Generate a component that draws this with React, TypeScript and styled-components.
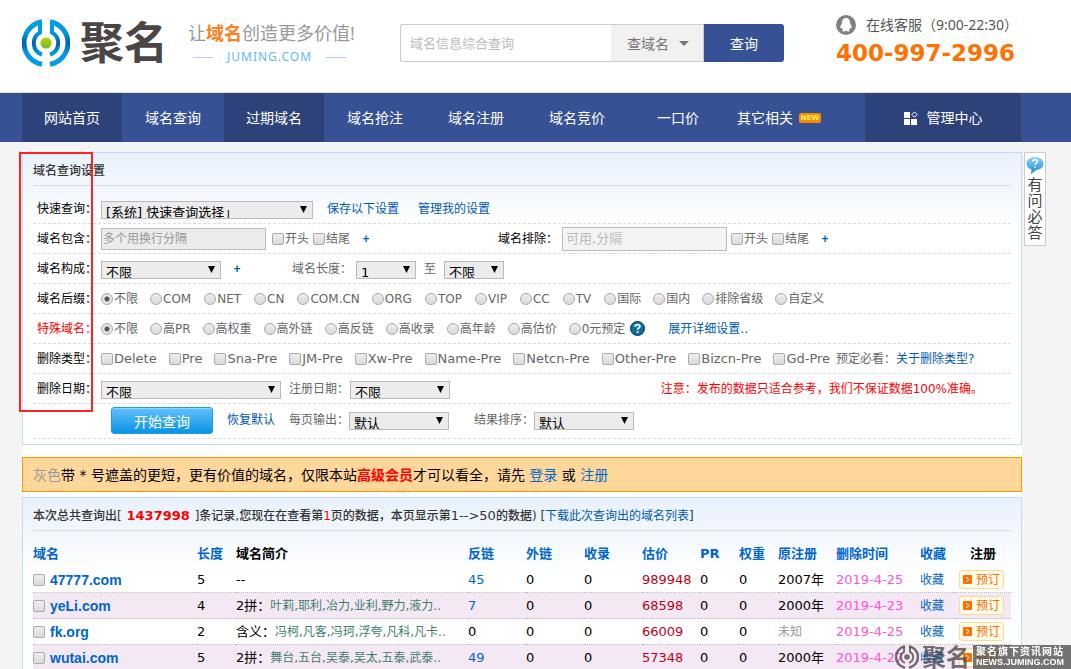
import React from "react";
import styled, { createGlobalStyle, css } from "styled-components";

const LATIN = '"DejaVu Sans", "Noto Sans CJK SC", sans-serif';
const YAHEI = '"Noto Sans", "Noto Sans CJK SC", sans-serif';

const GlobalStyle = createGlobalStyle`
  * { box-sizing: border-box; }
  html { scrollbar-width: none; }
  body { margin: 0; background: #f4f4f4; color: #666; font: 12px/16px ${LATIN}; }
  button, input, select { font-family: inherit; margin: 0; }
  a { color: #0059b2; text-decoration: none; }
`;

/* ---------- header ---------- */
const Header = styled.header`
  display: flex;
  height: 93px;
  padding: 0 22px;
  background: #fff;
  border-bottom: 1px solid #ddd;
  font-family: ${YAHEI};
  white-space: nowrap;
`;
const Brand = styled.a`
  display: flex;
  gap: 10px;
  padding-top: 19px;
  width: 166px;
  flex: none;
`;
const BrandName = styled.span`
  font-size: 44px;
  line-height: 46px;
  font-weight: 700;
  color: #4b4545;
`;
const Slogan = styled.div`
  width: 170px;
  flex: none;
  padding-top: 22px;
`;
const SloganText = styled.p`
  margin: 0;
  font-size: 18px;
  line-height: 22px;
  color: #999;
  b { color: #ff7f1a; }
`;
const SloganSite = styled.p`
  display: flex;
  align-items: center;
  justify-content: space-between;
  margin: 4px 0 0;
  padding: 0 12px 0 5px;
  font-size: 12px;
  line-height: 18px;
  letter-spacing: 1px;
  color: #5fbcea;
  &::before, &::after { content: ""; width: 20px; height: 1px; background: #a5d8ee; }
`;
const Search = styled.form`
  display: flex;
  width: 384px;
  height: 38px;
  margin: 24px 0 0 42px;
`;
const SearchInput = styled.input`
  flex: 1;
  min-width: 0;
  padding: 0 9px;
  border: 1px solid #ccc;
  border-right: 0;
  border-radius: 3px 0 0 3px;
  font-size: 13px;
  color: #555;
  &::placeholder { color: #bbb; opacity: 1; }
`;
const SearchKind = styled.button`
  display: flex;
  align-items: center;
  gap: 10px;
  width: 93px;
  padding: 0 0 0 16px;
  border: 1px solid #ccc;
  border-left: 0;
  background: #f1f1f1;
  font-size: 14px;
  color: #777;
  svg { flex: none; }
`;
const SearchButton = styled.button`
  width: 80px;
  border: 0;
  border-radius: 0 3px 3px 0;
  background: #365194;
  color: #fff;
  font-size: 14px;
`;
const Service = styled.div`
  margin: 14px 0 0 52px;
`;
const ServiceHours = styled.div`
  display: flex;
  align-items: center;
  gap: 10px;
  height: 22px;
  font-size: 14px;
  color: #555;
`;
const Phone = styled.strong`
  display: block;
  font: 700 23px/34px "DejaVu Sans", sans-serif;
  color: #ff7200;
`;

/* ---------- navigation ---------- */
const Nav = styled.nav`
  display: flex;
  gap: 1px;
  height: 49px;
  padding: 0 50px 0 22px;
  background: #365194;
  font: 14px/49px ${YAHEI};
`;
const NavLink = styled.a<{ $dark?: boolean; $wide?: boolean }>`
  display: flex;
  align-items: center;
  justify-content: center;
  gap: ${(p) => (p.$wide ? 9 : 6)}px;
  width: ${(p) => (p.$wide ? 156 : 100)}px;
  flex: none;
  margin-left: ${(p) => (p.$wide ? "auto" : "0")};
  color: #fff;
  background: ${(p) => (p.$dark ? "#2d4279" : "transparent")};
`;
const NewTag = styled.span`
  width: 22px;
  border-radius: 2px;
  background: #ff8a00;
  color: #fff46b;
  font: 700 7px/10px "DejaVu Sans", sans-serif;
  text-align: center;
`;

/* ---------- page body ---------- */
const Body = styled.div`
  display: flex;
  align-items: flex-start;
  gap: 2px;
  padding: 10px 25px 0 22px;
`;
const Main = styled.main`
  flex: 1;
  min-width: 0;
  background: #fff;
`;
const HelpTab = styled.a`
  display: flex;
  flex-direction: column;
  align-items: center;
  width: 22px;
  height: 94px;
  padding: 3px 2px;
  border: 1px solid #ccc;
  background: #fff;
  color: #444;
  font: 15px/16px ${YAHEI};
  text-align: center;
`;
const Panel = styled.section`
  position: relative;
  padding: 0 10px;
  border: 1px solid #c3daf3;
  background: linear-gradient(#e8f1fc, #fff 76px);
`;
const PanelTitle = styled.h2`
  height: 33px;
  margin: 0;
  border-bottom: 1px solid #d8dde3;
  font-size: 12px;
  line-height: 36px;
  font-weight: 500;
  color: #333;
  white-space: nowrap;
`;
const Marker = styled.div`
  position: absolute;
  left: -4px;
  top: -1px;
  width: 74px;
  height: 260px;
  border: 2px solid #f22;
  pointer-events: none;
`;
const SettingsForm = styled.form`
  padding: 8px 0 5px;
`;
const Row = styled.div<{ $tall?: boolean }>`
  display: flex;
  align-items: center;
  height: ${(p) => (p.$tall ? 35 : 30)}px;
  padding-bottom: ${(p) => (p.$tall ? 3 : 0)}px;
  border-bottom: 1px dashed #ddd;
  white-space: nowrap;
`;
const RowLabel = styled.span<{ $hot?: boolean }>`
  width: 68px;
  flex: none;
  padding-left: 4px;
  color: ${(p) => (p.$hot ? "#f00" : "#000")};
`;
const Options = styled.div`
  display: flex;
  gap: 12px;
`;
const InlineText = styled.label<{ $ml: number; $w?: number; $dark?: boolean }>`
  margin-left: ${(p) => p.$ml}px;
  width: ${(p) => (p.$w ? p.$w + "px" : "auto")};
  flex: none;
  color: ${(p) => (p.$dark ? "#000" : "inherit")};
`;
const RowLink = styled.a<{ $ml: number }>`
  margin-left: ${(p) => p.$ml}px;
`;
const PlusButton = styled.button`
  width: 8px;
  margin-left: 12px;
  padding: 0;
  border: 0;
  background: none;
  font: 700 12px/16px "Liberation Sans", sans-serif;
  color: #0066b3;
`;
const Warning = styled.p`
  margin: 0 28px 0 auto;
  color: #f00;
`;
const SelectBox = styled.span<{ $w: number }>`
  position: relative;
  display: block;
  flex: none;
  width: ${(p) => p.$w}px;
  height: 18px;
  margin-top: 3px;
  svg { position: absolute; right: 6px; top: 5px; pointer-events: none; }
  select {
    display: block;
    appearance: none;
    width: 100%;
    height: 18px;
    padding: 4px 14px 0 4px;
    border: 1px solid #bbb;
    border-radius: 0;
    background: #ececec;
    color: #000;
    font-size: 13px;
    line-height: 14px;
  }
`;
const TextInput = styled.input<{ $light?: boolean }>`
  width: 165px;
  height: ${(p) => (p.$light ? 24 : 22)}px;
  padding: 0 ${(p) => (p.$light ? 3 : 1)}px;
  border: 1px solid #bbb;
  background: ${(p) => (p.$light ? "#f4f4f4" : "#ececec")};
  font-size: ${(p) => (p.$light ? 13 : 12)}px;
  &::placeholder { color: ${(p) => (p.$light ? "#bbb" : "#999")}; opacity: 1; }
`;
const Choice = styled.label<{ $big?: boolean; $latin?: boolean }>`
  display: flex;
  align-items: center;
  gap: 1px;
  padding-right: ${(p) => (p.$latin ? 1 : 0)}px;
  font-size: ${(p) => (p.$big ? 13 : 12)}px;
`;
const toggle = css`
  appearance: none;
  flex: none;
  width: 12px;
  height: 12px;
  margin: 1px 0 0;
  border: 1px solid #aaa;
  background: linear-gradient(#eee, #dadada);
`;
const Check = styled.input`
  ${toggle}
  border-radius: 2px;
`;
const Radio = styled.input`
  ${toggle}
  border-radius: 50%;
  &:checked { background: radial-gradient(circle, #555 0 2px, #e6e6e6 3px); }
`;
const Pair = styled.div<{ $ml: number }>`
  display: flex;
  gap: 4px;
  margin-left: ${(p) => p.$ml}px;
`;
const Submit = styled.button`
  width: 102px;
  height: 27px;
  margin: 2px 0 0 78px;
  padding: 0;
  border: 1px solid #1f9be8;
  border-radius: 3px;
  box-shadow: inset 0 1px 0 #8fd6ff;
  background: linear-gradient(#62c1fb, #0a93e4);
  color: #fff;
  font-size: 14px;
`;
const HelpIcon = styled.svg`
  margin-left: 5px;
`;

/* ---------- notice and results ---------- */
const Notice = styled.p`
  margin: 12px 0 5px;
  padding: 0 10px;
  height: 35px;
  border: 1px solid #f90;
  background: #ffd79b;
  color: #000;
  font: 14px/34px ${LATIN};
  white-space: nowrap;
  i { font-style: normal; color: #999; }
  b { color: #f00; }
  a { color: #0066cc; }
`;
const Total = styled.b`
  margin: 0 1px;
  font-size: 13px;
  color: #f00;
`;
const Thin = styled.span<{ $big?: boolean; $hot?: boolean }>`
  font-weight: 400;
  font-size: ${(p) => (p.$big ? 13 : 12)}px;
  color: ${(p) => (p.$hot ? "#f00" : "inherit")};
`;
const Table = styled.table`
  width: 100%;
  margin-top: 9px;
  border-collapse: separate;
  border-spacing: 0;
  table-layout: fixed;
  color: #000;
  font-size: 13px;
  white-space: nowrap;
`;
const Th = styled.th<{ $plain?: boolean; $center?: boolean }>`
  height: 27px;
  padding: 0;
  text-align: ${(p) => (p.$center ? "center" : "left")};
  color: ${(p) => (p.$plain ? "#000" : "#0066cc")};
`;
const Tr = styled.tr`
  &:nth-child(even) { background: #f4e8f5; }
`;
const Td = styled.td<{ $color?: string }>`
  height: 26px;
  padding: 0;
  border-bottom: 1px dotted #bbb;
  color: ${(p) => p.$color ?? "#000"};
`;
const DomainCell = styled.div`
  display: flex;
  align-items: center;
  gap: 5px;
  a { font: 700 14px/16px "Liberation Sans", sans-serif; color: #0066cc; }
`;
const Meaning = styled.span`
  font-size: 12px;
  color: #3f7d6e;
`;
const Fav = styled.a`
  font-size: 12px;
  color: #0066cc;
`;
const Unknown = styled.span`
  font-size: 12px;
  color: #999;
`;
const Book = styled.button`
  display: flex;
  align-items: center;
  gap: 4px;
  width: 45px;
  height: 19px;
  margin-left: 4px;
  padding: 0 3px;
  border: 1px solid #ffd990;
  border-radius: 3px;
  background: #fffbe8;
  color: #ff6f00;
  font-size: 12px;
  line-height: 14px;
`;

/* ---------- watermark ---------- */
const Watermark = styled.div`
  position: fixed;
  right: 0;
  bottom: 0;
  display: flex;
  align-items: center;
  gap: 3px;
  height: 25px;
  color: rgba(70, 66, 66, 0.75);
  font: 700 24px/25px ${YAHEI};
  white-space: nowrap;
  pointer-events: none;
`;
const WatermarkPlate = styled.div`
  width: 98px;
  height: 24px;
  padding: 1px 3px;
  background: rgba(60, 60, 60, 0.7);
  color: #fff;
  font-size: 10px;
  line-height: 11px;
  letter-spacing: 1px;
  small { display: block; letter-spacing: 0; font: 700 9px/10px "Liberation Sans", sans-serif; }
`;

function LogoMark({ size, mono }: { size: number; mono?: boolean }) {
  const stroke = mono ? "rgba(70,66,66,.75)" : "url(#ring)";
  return (
    <svg width={size} height={size} viewBox="0 0 48 48" fill="none" aria-hidden="true">
      <defs>
        <linearGradient id="ring" x1="0" y1="0" x2="0" y2="48" gradientUnits="userSpaceOnUse">
          <stop offset="0" stopColor="#00a0ea" />
          <stop offset=".3" stopColor="#0096e0" />
          <stop offset=".5" stopColor="#0060b4" />
          <stop offset=".7" stopColor="#0096e0" />
          <stop offset="1" stopColor="#00a0ea" />
        </linearGradient>
        <linearGradient id="core" x1="0" y1="0" x2="0" y2="1">
          <stop offset="0" stopColor="#b9d400" />
          <stop offset="1" stopColor="#77b82a" />
        </linearGradient>
      </defs>
      <g stroke={stroke} strokeWidth="5">
        <path d="M20 2.700A21.600 21.600 0 0 0 20 45.300" />
        <path d="M28 2.700A21.600 21.600 0 0 1 28 45.300" />
      </g>
      <g stroke={stroke} strokeWidth="4">
        <path d="M18 4V13.600A12 12 0 0 0 20 35.500" />
        <path d="M30 4V13.600A12 12 0 0 1 28 35.500" />
      </g>
      <circle cx="24" cy="24" r="5.600" fill={mono ? stroke : "url(#core)"} />
    </svg>
  );
}

function Select({ width, value, label, id }: { width: number; value: string; label: string; id?: string }) {
  return (
    <SelectBox $w={width}>
      <select aria-label={label} id={id} defaultValue={value}>
        <option>{value}</option>
      </select>
      <svg width="7" height="7" viewBox="0 0 7 7" aria-hidden="true"><path d="M0 0h7L3.500 7z" fill="#000" /></svg>
    </SelectBox>
  );
}

function StartEnd({ ml }: { ml: number }) {
  return (
    <Pair $ml={ml}>
      <Choice><Check type="checkbox" />开头</Choice>
      <Choice><Check type="checkbox" />结尾</Choice>
    </Pair>
  );
}

function Radios({ name, items }: { name: string; items: string[] }) {
  return (
    <Options>
      {items.map((t, i) => (
        <Choice key={t} $latin={/^[A-Z]{2,3}$/.test(t)}>
          <Radio type="radio" name={name} defaultChecked={i === 0} />{t}
        </Choice>
      ))}
    </Options>
  );
}

const NAV = ["网站首页", "域名查询", "过期域名", "域名抢注", "域名注册", "域名竞价", "一口价"];
const SUFFIXES = ["不限", "COM", "NET", "CN", "COM.CN", "ORG", "TOP", "VIP", "CC", "TV", "国际", "国内", "排除省级", "自定义"];
const SPECIALS = ["不限", "高PR", "高权重", "高外链", "高反链", "高收录", "高年龄", "高估价", "0元预定"];
const DELETES = ["Delete", "Pre", "Sna-Pre", "JM-Pre", "Xw-Pre", "Name-Pre", "Netcn-Pre", "Other-Pre", "Bizcn-Pre", "Gd-Pre"];
const COLS = [164, 39, 232, 58, 58, 58, 58, 39, 39, 58, 84, 35, 56];
const HEADS = ["域名", "长度", "域名简介", "反链", "外链", "收录", "估价", "PR", "权重", "原注册", "删除时间", "收藏", "注册"];
const ROWS = [
  { name: "47777.com", len: 5, kind: "--", meaning: "", back: "45", price: "989948", year: "2007年", date: "2019-4-25" },
  { name: "yeLi.com", len: 4, kind: "2拼：", meaning: "叶莉,耶利,冶力,业利,野力,液力..", back: "7", price: "68598", year: "2000年", date: "2019-4-23" },
  { name: "fk.org", len: 2, kind: "含义：", meaning: "冯柯,凡客,冯珂,浮夸,凡科,凡卡..", back: "0", price: "66009", year: "", date: "2019-4-25" },
  { name: "wutai.com", len: 5, kind: "2拼：", meaning: "舞台,五台,吴泰,吴太,五泰,武泰..", back: "49", price: "57348", year: "2000年", date: "2019-4-27" },
];

export default function App() {
  return (
    <>
      <GlobalStyle />
      <Header>
        <Brand href="#">
          <LogoMark size={48} />
          <BrandName>聚名</BrandName>
        </Brand>
        <Slogan>
          <SloganText>让<b>域名</b>创造更多价值!</SloganText>
          <SloganSite>JUMING.COM</SloganSite>
        </Slogan>
        <Search>
          <SearchInput aria-label="域名信息综合查询" placeholder="域名信息综合查询" />
          <SearchKind type="button">
            查域名
            <svg width="10" height="5" viewBox="0 0 10 5" aria-hidden="true"><path d="M0 0h10L5 5z" fill="#777" /></svg>
          </SearchKind>
          <SearchButton type="button">查询</SearchButton>
        </Search>
        <Service>
          <ServiceHours>
            <svg width="20" height="20" viewBox="0 0 20 20" aria-hidden="true">
              <circle cx="10" cy="10" r="10" fill="#808080" />
              <path d="M10 3C7.400 3 6 5 6 7.500c0 1.500-1.700 3-1.700 5 0 1 .7 1.200 1.500.2.200.9.600 1.600 1.200 2.100-.9.400-1 1.700.6 1.700 1.100 0 1.900-.3 2.400-.8.500.5 1.300.8 2.400.8 1.600 0 1.500-1.300.6-1.700.6-.5 1-1.200 1.200-2.100.8 1 1.500.8 1.500-.2 0-2-1.700-3.500-1.700-5C14 5 12.600 3 10 3z" fill="#fff" />
            </svg>
            <span>在线客服（9:00-22:30）</span>
          </ServiceHours>
          <Phone>400-997-2996</Phone>
        </Service>
      </Header>

      <Nav>
        {NAV.map((t, i) => (
          <NavLink key={t} href="#" $dark={i === 0 || i === 2}>{t}</NavLink>
        ))}
        <NavLink href="#">其它相关<NewTag>NEW</NewTag></NavLink>
        <NavLink href="#" $dark $wide>
          <svg width="14" height="14" viewBox="0 0 14 14" fill="#fff" aria-hidden="true">
            <path d="M0 1h6v6H0zM0 8h6v6H0zM7 8h6v6H7z" />
            <path d="M10.500 .9l2.700 2.700-2.700 2.700-2.700-2.700z" fill="none" stroke="#fff" />
          </svg>
          管理中心
        </NavLink>
      </Nav>

      <Body>
        <Main>
          <Panel>
            <PanelTitle>域名查询设置</PanelTitle>
            <SettingsForm>
              <Row>
                <RowLabel>快速查询：</RowLabel>
                <Select width={212} value="[系统] 快速查询选择」" label="快速查询" />
                <RowLink href="#" $ml={14}>保存以下设置</RowLink>
                <RowLink href="#" $ml={19}>管理我的设置</RowLink>
              </Row>
              <Row>
                <RowLabel>域名包含：</RowLabel>
                <TextInput aria-label="域名包含" placeholder="多个用换行分隔" />
                <StartEnd ml={6} />
                <PlusButton type="button">+</PlusButton>
                <InlineText $ml={128} $w={64} $dark htmlFor="exclude">域名排除：</InlineText>
                <TextInput id="exclude" $light placeholder="可用,分隔" />
                <StartEnd ml={4} />
                <PlusButton type="button">+</PlusButton>
              </Row>
              <Row>
                <RowLabel>域名构成：</RowLabel>
                <Select width={120} value="不限" label="域名构成" />
                <PlusButton type="button">+</PlusButton>
                <InlineText $ml={51} $w={64} htmlFor="len">域名长度：</InlineText>
                <Select width={60} value="1" label="最小长度" id="len" />
                <InlineText $ml={8} $w={20} htmlFor="maxlen">至</InlineText>
                <Select width={60} value="不限" label="最大长度" id="maxlen" />
              </Row>
              <Row>
                <RowLabel>域名后缀：</RowLabel>
                <Radios name="suffix" items={SUFFIXES} />
              </Row>
              <Row>
                <RowLabel $hot>特殊域名：</RowLabel>
                <Radios name="special" items={SPECIALS} />
                <HelpIcon width="15" height="15" viewBox="0 0 15 15" role="img" aria-label="帮助">
                  <circle cx="7.500" cy="7.500" r="7" fill="#0a6f9c" stroke="#12354a" />
                  <path d="M2.500 5.500a5.500 4.500 0 0 1 10 0z" fill="#5fb5d6" opacity=".6" />
                  <path d="M5.300 5.800c0-3 4.500-3 4.500-.4 0 1.500-2.200 1.700-2.200 3.400M7.600 10.200v1.800" fill="none" stroke="#fff" strokeWidth="1.700" />
                </HelpIcon>
                <RowLink href="#" $ml={23}>展开详细设置..</RowLink>
              </Row>
              <Row>
                <RowLabel>删除类型：</RowLabel>
                <Options>
                  {DELETES.map((t) => (
                    <Choice key={t} $big><Check type="checkbox" />{t}</Choice>
                  ))}
                </Options>
                <InlineText as="span" $ml={6}>预定必看：</InlineText>
                <RowLink href="#" $ml={0}>关于删除类型?</RowLink>
              </Row>
              <Row>
                <RowLabel>删除日期：</RowLabel>
                <Select width={180} value="不限" label="删除日期" />
                <InlineText $ml={8} $w={61} htmlFor="reg">注册日期：</InlineText>
                <Select width={100} value="不限" label="注册日期" id="reg" />
                <Warning>注意：发布的数据只适合参考，我们不保证数据100%准确。</Warning>
              </Row>
              <Row $tall>
                <Submit type="button">开始查询</Submit>
                <RowLink href="#" $ml={14}>恢复默认</RowLink>
                <InlineText $ml={14} $w={60} htmlFor="per">每页输出：</InlineText>
                <Select width={100} value="默认" label="每页输出" id="per" />
                <InlineText $ml={25} $w={60} htmlFor="sort">结果排序：</InlineText>
                <Select width={100} value="默认" label="结果排序" id="sort" />
              </Row>
            </SettingsForm>
            <Marker />
          </Panel>

          <Notice>
            <i>灰色</i>带 * 号遮盖的更短，更有价值的域名，仅限本站<b>高级会员</b>才可以看全，请先 <a href="#">登录</a> 或 <a href="#">注册</a>
          </Notice>

          <Panel>
            <PanelTitle>
              本次总共查询出[ <Total>1437998</Total> ]条记录,您现在在查看第<Thin $hot>1</Thin>页的数据，本页显示第<Thin $big>1--&gt;50</Thin>的数据) <Thin>[<a href="#">下载此次查询出的域名列表</a>]</Thin>
            </PanelTitle>
            <Table>
              <colgroup>{COLS.map((w, i) => <col key={i} width={w} />)}</colgroup>
              <thead>
                <tr>
                  {HEADS.map((h, i) => (
                    <Th key={h} $plain={i === 2 || i === 12} $center={i === 12}>{h}</Th>
                  ))}
                </tr>
              </thead>
              <tbody>
                {ROWS.map((r) => (
                  <Tr key={r.name}>
                    <Td>
                      <DomainCell>
                        <Check type="checkbox" aria-label={r.name} />
                        <a href="#">{r.name}</a>
                      </DomainCell>
                    </Td>
                    <Td>{r.len}</Td>
                    <Td>{r.kind}<Meaning>{r.meaning}</Meaning></Td>
                    <Td $color={r.back === "0" ? "#000" : "#0066cc"}>{r.back}</Td>
                    <Td>0</Td>
                    <Td>0</Td>
                    <Td $color="#c00020">{r.price}</Td>
                    <Td>0</Td>
                    <Td>0</Td>
                    <Td>{r.year || <Unknown>未知</Unknown>}</Td>
                    <Td $color="#f957d4">{r.date}</Td>
                    <Td><Fav href="#">收藏</Fav></Td>
                    <Td>
                      <Book type="button">
                        <svg width="9" height="9" viewBox="0 0 9 9" aria-hidden="true">
                          <rect width="9" height="9" rx="1" fill="#ff6f00" />
                          <path d="M3 2l3 2.500L3 7" fill="none" stroke="#fff" />
                        </svg>
                        预订
                      </Book>
                    </Td>
                  </Tr>
                ))}
              </tbody>
            </Table>
          </Panel>
        </Main>

        <HelpTab href="#">
          <svg width="18" height="20" viewBox="0 0 18 20" aria-hidden="true">
            <defs>
              <linearGradient id="bubble" x1="0" y1="0" x2="0" y2="1">
                <stop offset="0" stopColor="#8fd4f5" />
                <stop offset="1" stopColor="#1489cf" />
              </linearGradient>
            </defs>
            <path d="M9 1C4 1 .5 3.800.5 7.500c0 2.900 2 5 5 6L5 18l5.500-4c4.200-.3 7-3 7-6.500C17.500 3.800 14 1 9 1z" fill="url(#bubble)" />
            <path d="M6.800 5.800c0-3 4.700-2.800 4.600-.3-.1 1.600-2.300 1.600-2.300 3.300M9.100 10.200v1.600" fill="none" stroke="#fff" strokeWidth="1.500" />
          </svg>
          有问必答
        </HelpTab>
      </Body>

      <Watermark aria-hidden="true">
        <LogoMark size={24} mono />
        <span>聚名</span>
        <WatermarkPlate>
          聚名旗下资讯网站
          <small>NEWS.JUMING.COM</small>
        </WatermarkPlate>
      </Watermark>
    </>
  );
}
